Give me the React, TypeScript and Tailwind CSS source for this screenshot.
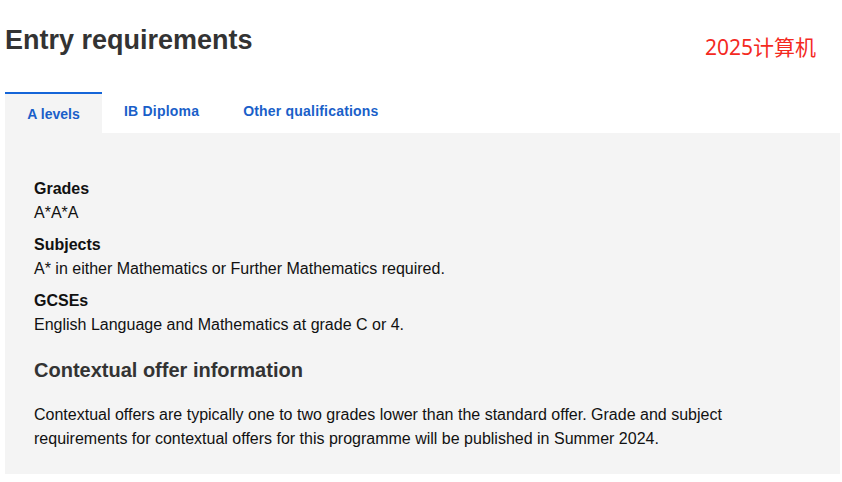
const tabs = ["A levels", "IB Diploma", "Other qualifications"];

const requirements = [
  { label: "Grades", value: "A*A*A" },
  { label: "Subjects", value: "A* in either Mathematics or Further Mathematics required." },
  { label: "GCSEs", value: "English Language and Mathematics at grade C or 4." },
];

export default function App() {
  return (
    <div className="w-[842px] h-[482px] bg-white font-['Liberation_Sans',Arial,sans-serif] text-[#111]">
      {/* Header */}
      <div className="flex items-start justify-between pl-[5px] pr-[26px] pt-[22px] h-[92px]">
        <h1 className="text-[27px] leading-[36px] font-bold text-[#333]">Entry requirements</h1>
        <span className="mt-[12px] text-[21px] leading-[26px] text-[#f42a1f] font-['Noto_Sans','Noto_Sans_CJK_SC',sans-serif]">
          2025计算机
        </span>
      </div>

      {/* Tabs */}
      <div className="flex pl-[5px] h-[41px]">
        {tabs.map((tab, i) =>
          i === 0 ? (
            <div
              key={tab}
              className="w-[97px] border-t-2 border-[#1565d8] bg-[#f4f4f4] flex items-center justify-center pt-[2px] text-[14px] font-bold text-[#1a5fc9]"
            >
              {tab}
            </div>
          ) : (
            <div
              key={tab}
              className="px-[22px] flex items-center text-[14px] tracking-[0.2px] font-bold text-[#1a5fc9] pb-[3px]"
            >
              {tab}
            </div>
          )
        )}
      </div>

      {/* Panel */}
      <div className="ml-[5px] w-[835px] h-[341px] bg-[#f4f4f4] px-[29px] pt-[44px]">
        {requirements.map((r) => (
          <div key={r.label} className="mb-[8px]">
            <div className="text-[16px] leading-[24px] font-bold">{r.label}</div>
            <div className="text-[16px] leading-[24px]">{r.value}</div>
          </div>
        ))}
        <h2 className="mt-[19px] text-[20px] leading-[28px] font-bold text-[#333]">Contextual offer information</h2>
        <p className="mt-[19px] text-[16px] leading-[24px]">
          Contextual offers are typically one to two grades lower than the standard offer. Grade and subject
          requirements for contextual offers for this programme will be published in Summer 2024.
        </p>
      </div>
    </div>
  );
}
